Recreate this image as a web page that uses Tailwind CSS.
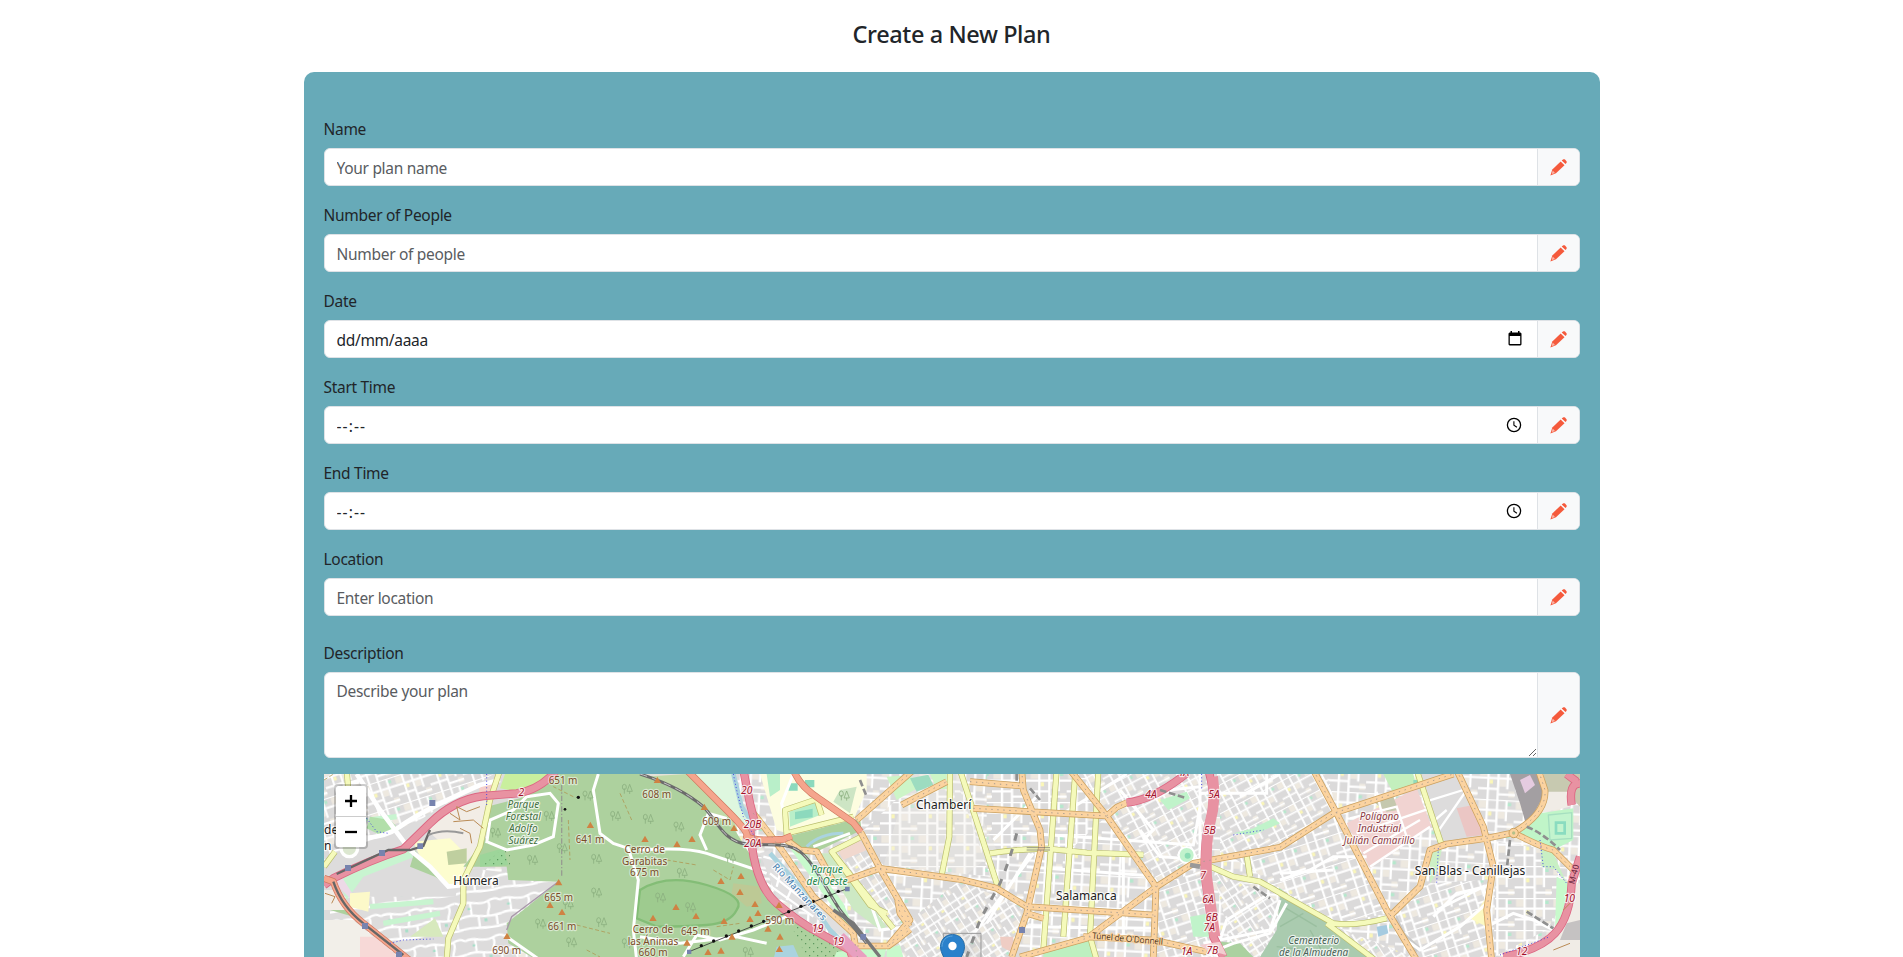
<!DOCTYPE html>
<html lang="en">
<head>
<meta charset="utf-8">
<title>Create a New Plan</title>
<script src="https://cdn.jsdelivr.net/npm/@tailwindcss/browser@4"></script>
</head>
<body class="h-[957px] overflow-hidden bg-white font-['Noto_Sans',sans-serif] text-base leading-6 text-[#212529]">
<svg class="hidden">
  <symbol id="pencil" viewBox="0 0 17 17">
    <g fill="#f55a3c"><path d="M11.700 1.400 13 .5c.6-.5 1.500-.4 2 .1l1.300 1.400c.6.6.6 1.400.1 2l-.9 1.100z"/><path d="M10.700 2.400 14.500 6.200 6 14.200.4 16.500 2.300 10.500z"/></g>
    <path d="M2.700 11.600 5 14 2.200 15 1.800 14.600z" fill="#fbb3a5"/>
  </symbol>
  <symbol id="clock" viewBox="0 0 16 16"><circle cx="8" cy="8" r="6.600" fill="none" stroke="#000" stroke-width="1.300"/><path d="M7.900 4.200v4l3 2" fill="none" stroke="#000" stroke-width="1.100"/></symbol>
</svg>
<main class="mx-auto flex w-[1296px] flex-col">
  <h4 class="flex h-[72px] items-center justify-center pb-1 text-[23.500px] font-medium tracking-[-0.4px]">Create a New Plan</h4>
  <form class="h-[885px] rounded-t-[10px] bg-[#67aab8] px-5 pt-11 tracking-[-0.3px]">
    <div class="mb-4"><label class="mb-1.5 block text-[15.500px] leading-[26px]">Name</label>
      <div class="flex h-[38px] overflow-hidden rounded-md border border-[#dee2e6] bg-white"><input class="min-w-0 flex-1 px-3 pt-px text-[15.500px] placeholder:text-[#595c5f]" placeholder="Your plan name"><span class="flex w-[42px] items-center border-l border-[#dee2e6] bg-[#f8f9fa] pl-3"><svg class="size-[17px]"><use href="#pencil"/></svg></span></div></div>
    <div class="mb-4"><label class="mb-1.5 block text-[15.500px] leading-[26px]">Number of People</label>
      <div class="flex h-[38px] overflow-hidden rounded-md border border-[#dee2e6] bg-white"><input class="min-w-0 flex-1 px-3 pt-px text-[15.500px] placeholder:text-[#595c5f]" placeholder="Number of people"><span class="flex w-[42px] items-center border-l border-[#dee2e6] bg-[#f8f9fa] pl-3"><svg class="size-[17px]"><use href="#pencil"/></svg></span></div></div>
    <div class="mb-4"><label class="mb-1.5 block text-[15.500px] leading-[26px]">Date</label>
      <div class="flex h-[38px] overflow-hidden rounded-md border border-[#dee2e6] bg-white"><input class="min-w-0 flex-1 px-3 pt-px text-[15.500px]" value="dd/mm/aaaa"><svg class="mr-[15px] mb-px h-[15px] w-[14px] self-center" viewBox="0 0 14 15"><path d="M2.500 0H4v1.500h6V0h1.500v1.500h1l1 1V13.500l-1 1h-11l-1-1V2.500l1-1h1zM1.800 5v8h10.400V5z" fill="#000" fill-rule="evenodd"/></svg><span class="flex w-[42px] items-center border-l border-[#dee2e6] bg-[#f8f9fa] pl-3"><svg class="size-[17px]"><use href="#pencil"/></svg></span></div></div>
    <div class="mb-4"><label class="mb-1.5 block text-[15.500px] leading-[26px]">Start Time</label>
      <div class="flex h-[38px] overflow-hidden rounded-md border border-[#dee2e6] bg-white"><input class="min-w-0 flex-1 px-3 pt-px text-[15.500px] tracking-[1.100px]" value="--:--"><svg class="mr-[15px] mb-px size-4 self-center"><use href="#clock"/></svg><span class="flex w-[42px] items-center border-l border-[#dee2e6] bg-[#f8f9fa] pl-3"><svg class="size-[17px]"><use href="#pencil"/></svg></span></div></div>
    <div class="mb-4"><label class="mb-1.5 block text-[15.500px] leading-[26px]">End Time</label>
      <div class="flex h-[38px] overflow-hidden rounded-md border border-[#dee2e6] bg-white"><input class="min-w-0 flex-1 px-3 pt-px text-[15.500px] tracking-[1.100px]" value="--:--"><svg class="mr-[15px] mb-px size-4 self-center"><use href="#clock"/></svg><span class="flex w-[42px] items-center border-l border-[#dee2e6] bg-[#f8f9fa] pl-3"><svg class="size-[17px]"><use href="#pencil"/></svg></span></div></div>
    <div class="mb-6"><label class="mb-1.5 block text-[15.500px] leading-[26px]">Location</label>
      <div class="flex h-[38px] overflow-hidden rounded-md border border-[#dee2e6] bg-white"><input class="min-w-0 flex-1 px-3 pt-px text-[15.500px] placeholder:text-[#595c5f]" placeholder="Enter location"><span class="flex w-[42px] items-center border-l border-[#dee2e6] bg-[#f8f9fa] pl-3"><svg class="size-[17px]"><use href="#pencil"/></svg></span></div></div>
    <div class="mb-4"><label class="mb-1.5 block text-[15.500px] leading-[26px]">Description</label>
      <div class="flex h-[86px] overflow-hidden rounded-md border border-[#dee2e6] bg-white"><textarea class="min-w-0 flex-1 resize-none px-3 py-1.5 text-[15.500px] placeholder:text-[#595c5f]" placeholder="Describe your plan"></textarea><svg class="mb-px size-2 self-end" viewBox="0 0 8 8"><path d="M0 8 7 1M4 8l3-3" stroke="#555" stroke-width=".9"/></svg><span class="flex w-[42px] items-center border-l border-[#dee2e6] bg-[#f8f9fa] pl-3"><svg class="size-[17px]"><use href="#pencil"/></svg></span></div></div>

    <div class="relative h-[183px] overflow-hidden bg-[#e0dfdf] tracking-normal">
      <svg class="block h-[183px] w-[1256px]" viewBox="12 12 3768 549" font-family="'Noto Sans',sans-serif">
        <defs>
          <pattern id="g0" width="112" height="96" patternUnits="userSpaceOnUse"><rect width="112" height="96" fill="#dbdada"/><path d="M4 4h24v22H4zM64 36h20v20H64zM92 70h18v18H92z" fill="#eee9e0"/><path d="M34 37h10v12H34z" fill="#fbf7b8"/><path d="M90 8h12v10H90z" fill="#b5e8cd"/><path d="M0 0h112M0 32h112M0 64h60M30 0v96M60 0v96M88 0v64M60 80h52" stroke="#fff" stroke-width="7" fill="none"/></pattern>
          <pattern id="g1" href="#g0" patternTransform="rotate(-28) scale(.8)"/>
          <pattern id="g2" href="#g0" patternTransform="rotate(57) scale(.75)"/>
          <pattern id="g3" href="#g0" patternTransform="rotate(3)"/>
          <pattern id="g4" href="#g0" patternTransform="rotate(-18) scale(.9)"/>
          <pattern id="sub" width="120" height="110" patternUnits="userSpaceOnUse" patternTransform="rotate(-8)"><path d="M0 20c30-14 50 12 80 0s30-4 40 0M0 60c40-14 60 14 120 0M0 95c40-8 60 10 120 0M30 15v40M84 20c10 20-10 30-4 42M50 62v34M104 62v30" stroke="#fff" stroke-width="7" fill="none"/><path d="M20 32h8v7h-8zM66 70h9v9h-9z" fill="#a7dfc9"/></pattern>
          <pattern id="dots" width="24" height="24" patternUnits="userSpaceOnUse"><circle cx="5" cy="5" r="2" fill="#4b8b4f"/><circle cx="17" cy="17" r="2" fill="#4b8b4f"/></pattern>
          <g id="tree" fill="none" stroke="#8bb07f" stroke-width="2.500"><ellipse cx="-7" cy="-6" rx="6" ry="8"/><path d="M-7-2v16M9-14 1 7h16zM9 7v8"/></g>
          <path id="pk" d="M0-10 11 9h-22z" fill="#cf8243"/>
          <g id="primary">
            <path d="M1100 0Q1160 60 1225 125T1280 200Q1310 215 1390 208L1415 198"/>
            <path d="M1420 0Q1440 50 1500 88L1600 158 1622 186"/>
            <path d="M12 325 40 335Q65 410 130 460L280 580"/>
          </g>
          <g id="secondary">
            <path d="M1300 130Q1340 180 1385 240L1480 380 1600 490 1612 561M1612 528H1705L1730 510 1770 478M1400 210 1440 240 1490 245 1540 335M1580 330 1680 295M1622 186 1680 295 1770 450 1705 528M1768 470 1740 430 1733 390M1680 295 1920 328 2030 355 2120 410M1610 150 1780 0M1745 105 1880 35"/>
            <path d="M1950 35 2105 48M2105 0 2110 60 2160 180 2165 230 2120 430 2075 561M1960 115 2360 138M2250 0 2360 138 2508 350 2500 561M2360 138 2390 112 2420 98M2100 561 2300 505 2510 350 2620 280 2880 232 3040 130 3400 12M2120 410 2500 435M2120 430 2170 445M2290 500 2500 510 2660 545"/>
            <path d="M2980 0 3050 130 3200 420 3290 570M3410 0 3490 170 3520 290 3500 420 3515 570M3210 438 3300 350 3330 240 3380 222 3500 205 3580 188Q3680 130 3675 60L3655 0M3580 188Q3660 230 3700 240L3760 300"/>
          </g>
          <g id="yellow">
            <path d="M1400 195 1395 120 1490 88 1505 135M1400 190 1500 165 1600 140M1625 200 1535 245 1650 405 1700 430M1535 245 1720 475M1890 0 1888 200 1865 315M2210 0 2170 540M2265 20 2230 500M2335 0 2310 500 2330 570M1920 0 2035 355M2010 250Q2080 238 2180 236L2300 248 2470 254M2640 276 2740 320 2820 335 2900 380M2780 255 2790 320M2880 370 3040 460Q3100 470 3200 445M3290 0 3365 225M3020 460 3165 570M540 0 510 90 480 230 430 330 430 400 385 505 380 570M80 0 85 60M12 290 45 245"/>
          </g>
          <g id="motor">
            <path d="M12 345 40 325Q150 270 250 238L330 160Q400 90 490 78L590 70Q660 60 710 0"/>
            <path d="M1270 0 1290 100 1310 180M1290 170Q1300 340 1370 400T1500 490L1590 540 1600 570"/>
            <path d="M2420 98Q2500 90 2600 10"/>
            <path d="M2665 0Q2690 80 2670 150T2655 320L2680 500 2710 561"/>
            <path d="M3780 260 3755 340Q3750 440 3705 490T3550 561M3740 12 3770 35M3755 105Q3745 40 3780 40"/>
          </g>
        </defs>
        <rect width="3800" height="570" fill="url(#g3)"/>
        <!-- districts -->
        <path d="M0 0H700L430 400 600 570H0z" fill="#dddcdc"/><path d="M0 0H540L300 150 12 270z" fill="url(#g4)"/>
        <path d="M30 380H600V570H30z" fill="url(#sub)"/><path d="M420 290 720 330 560 570H380z" fill="#dddcdc"/><path d="M420 290 720 330 560 570H380z" fill="url(#sub)"/>
        <path d="M2000 0H2260L2360 138 2250 240 2000 240z" fill="url(#g0)"/>
        <path d="M2280 0H2670V250L2520 340 2360 138z" fill="url(#g1)"/>
        <path d="M2700 0H3020L3050 130 2880 232 2700 260z" fill="url(#g1)"/>
        <path d="M2720 250 2880 232 3040 130 3210 430 3040 460z" fill="url(#g4)"/>
        <path d="M2680 300 3020 460 3280 561H2740z" fill="url(#g2)"/>
        <path d="M2510 350 2670 290 2680 561H2510z" fill="url(#g4)"/>
        <path d="M1920 330 2140 430 2075 561H1700L1770 450z" fill="url(#g2)"/>
        <path d="M1560 260 1640 200 1770 450 1720 470z" fill="url(#g2)"/>
        <path d="M1760 60H1920L2010 320 1690 285 1625 186z" fill="url(#g0)"/>
        <path d="M1770 0 1920 0 2030 240 1920 330 1690 290z" fill="#f2efe9" opacity=".35"/>
        <path d="M3220 430 3330 340 3500 330 3510 561H3290z" fill="url(#g4)"/>
        <path d="M3530 215 3700 240 3730 400 3680 480 3520 561z" fill="url(#g0)"/>
        <path d="M3300 12H3410L3500 200 3360 222z" fill="#dddcdc"/><path d="M3300 100 3430 60M3350 190 3440 60M3345 150 3380 120" stroke="#fff" stroke-width="7"/>
        <!-- land use -->
        <path d="M330 160Q400 90 500 90L490 200 430 320 400 250 320 180z" fill="#f2ede6"/>
        <path d="M280 215 390 205 435 250 430 320 395 350 300 260z" fill="#fdfdcf"/><path d="M380 245 440 235V280L385 285z" fill="#bfcf9f"/>
        <path d="M285 240 370 340 395 355 345 320 270 290z" fill="#add19e"/>
        <path d="M50 320 265 240 280 262 130 320 80 390z" fill="#c8f4d0"/><path d="M65 320 100 375 90 385 35 330z" fill="#ecd9e7"/>
        <path d="M150 410 340 395M190 460 360 430M150 150 230 140" stroke="#c8f4d0" stroke-width="16"/><path d="M90 370 150 365 145 425 90 410z" fill="#fcf9c9"/>
        <path d="M150 140 210 150 240 180 180 195 140 175z" fill="#b2dfaa"/><path d="M12 415 60 410 130 460 100 440z" fill="#add19e"/><path d="M12 360 40 360 80 420 12 420z" fill="#f2ede6"/>
        <path d="M10 450H100L160 500 220 570H10z" fill="#f2efe9"/><path d="M120 500 165 500 245 570H120z" fill="#f7d9d7"/><path d="M345 445 370 500H270z" fill="#d7e9bd"/>
        <path d="M555 12H690Q640 80 540 55z" fill="#c9ef9e"/><path d="M480 40H520L510 80H475z" fill="#f5cfc9"/>
        <path d="M700 12H960L1060 35 1120 70 1220 140 1300 270 1340 340 1390 420 1500 490 1600 570H650L565 520 560 460 715 335 565 330 560 290 430 290 500 200 500 110 600 85z" fill="#add19e"/>
        <path d="M960 12H1120L1260 170 1210 150 1080 65z" fill="#e4e2d8"/><path d="M970 20 1080 62 1200 150 1255 185 1230 130 1100 12z" fill="#c0daa8"/>
        <path d="M1110 12H1240L1290 170 1240 150z" fill="#def7df"/>
        <path d="M550 235 565 285 480 290 480 255z" fill="#9dd59a"/>
        <path d="M550 235H570V285H490z" fill="url(#dots)"/>
        <path d="M960 360Q1040 310 1160 345T1250 420Q1230 460 1160 465T1010 470L950 445z" fill="#9ecb8f" stroke="#83bd76" stroke-width="7"/>
        <path d="M1240 340 1320 350 1325 400 1280 410 1235 370z" fill="#bdc995"/>
        <path d="M1320 12H1640L1640 60 1600 150 1400 190 1370 180z" fill="#fdfde0"/>
        <path d="M1340 12H1380V60L1350 80zM1408 125 1495 95 1500 135 1410 170z" fill="#b9efc9"/><path d="M1425 126 1478 116V142L1425 148zM1405 40h28v22h-28zM1455 30h28v22h-28z" fill="#8cd9bd"/>
        <path d="M1560 60 1610 50 1590 130 1540 95z" fill="#cde5c4"/><path d="M1700 20 1770 15 1800 50 1730 90zM1830 12h50v45h-30z" fill="#cdf5c7"/><path d="M1770 25 1825 14 1840 45 1790 65z" fill="#9ddcc0"/>
        <path d="M1400 200 1620 145 1625 180 1490 245 1440 240z" fill="#add19e"/><path d="M1460 230Q1500 190 1570 190" stroke="#aad3df" stroke-width="9" fill="none"/>
        <path d="M1410 235 1450 240 1570 400 1600 470 1570 455z" fill="#c8facc"/><path d="M1500 250 1535 250 1700 470 1680 480 1600 420z" fill="#cde9c4"/>
        <path d="M1550 235 1620 210 1640 240 1570 270z" fill="#f1d8ce"/><path d="M1320 250 1350 240 1550 440 1600 520 1480 440 1370 380z" fill="#e0dfdf"/><path d="M1330 260 1370 270 1490 420M1350 310 1500 430M1340 340 1480 440M1390 270 1370 350M1430 320 1400 390" stroke="#fff" stroke-width="7" fill="none"/>
        <path d="M1400 440 1460 470 1580 540 1590 561H1460z" fill="#add19e"/><path d="M1400 440 1460 470 1580 540 1590 561H1460z" fill="url(#dots)"/><path d="M1370 530 1420 525 1440 570H1360z" fill="#aad3df"/>
        <path d="M1550 545 1700 530 1690 570H1540zM1700 535 1740 525 1750 561H1700z" fill="#c8facc"/>
        <path d="M2170 530 2310 505 2320 561H2170z" fill="#bdf0c0"/><path d="M2520 90 2600 65 2610 85 2545 120zM2740 190 2800 175 2860 145 2880 160 2800 195z" fill="#c0f3ca"/>
        <path d="M2610 440 2670 430 2690 500H2620z" fill="#c0f3ca"/><path d="M2040 500H2080V550L2045 530z" fill="#efcdc4"/>
        <path d="M2700 515 2760 520 2800 561H2700z" fill="#abd1a0"/><path d="M2840 561 2880 460 2940 480V561z" fill="#aaccaf"/>
        <path d="M2880 380 3030 460 3150 561H2820L2870 480z" fill="#aacbaf"/><path d="M2890 410 2990 470M2880 470 2950 430M2970 480 3010 550M2870 530 3050 550" stroke="#9abf9f" stroke-width="4"/>
        <path d="M3080 160 3290 55 3335 170 3150 295z" fill="#f1d3d1"/><path d="M3410 115 3460 105 3490 195 3440 200z" fill="#ebc6c4"/><path d="M3160 95 3220 80 3235 120 3200 125z" fill="#c5c8ae"/>
        <path d="M3190 12H3280L3290 50 3220 70z" fill="#c3efbd"/><path d="M3280 30h20v20h-20z" fill="#91dabb"/>
        <path d="M3090 145 3230 110 3270 230M3130 250 3300 150M3170 65 3190 150M3110 190 3330 115M3150 290 3330 170" stroke="#fff" stroke-width="7" fill="none"/>
        <path d="M3570 12H3660L3680 60 3620 170 3600 100z" fill="#a39fa2"/><path d="M3600 30 3630 15 3645 45 3615 70z" fill="#e5cbe0"/>
        <path d="M3670 12H3780V110L3740 65 3685 80z" fill="#c7c9b0"/><path d="M3685 65H3740L3750 110 3660 130z" fill="#f0ece6"/><path d="M3660 130 3760 115V210L3700 240 3600 190z" fill="#c0f5c8"/><path d="M3685 135 3755 128V205L3690 210z" fill="#c3f4ce" stroke="#a6dfc0" stroke-width="4"/><path d="M3708 158h26v32h-26z" fill="none" stroke="#8adcc0" stroke-width="8"/>
        <path d="M3660 210 3700 250 3740 340 3710 300 3665 290z" fill="#c8f0c4"/><path d="M3710 320 3750 340 3735 440 3705 480z" fill="#c8facc"/>
        <path d="M3755 340H3780V561H3560L3700 510z" fill="#f0ece6"/><path d="M3740 460 3780 450V510H3720z" fill="#c5c2c2"/><path d="M3460 440 3500 380 3500 470 3440 440z" fill="#fcf9c3"/>
        <path d="M3330 230 3365 240 3350 310 3330 340z" fill="#cdf0c5"/><path d="M3230 435 3255 490 3300 530 3280 561 3225 450z" fill="#c9c9c9"/><path d="M3170 470 3200 465 3205 490 3175 500z" fill="#a5cbe0"/>
        <!-- streets -->
        <g stroke="#fff" stroke-width="9" fill="none">
          <path d="M80 200Q180 215 240 170T480 45L540 30M110 12 180 120 240 200 270 240 330 290 385 350 430 345" stroke-width="14"/>
          <path d="M500 220 510 150 580 120 620 80 690 70 715 100 700 200 640 225 560 240 500 215M835 12 820 60 840 190 880 220 925 235 955 330 940 480 950 570M560 500 660 570M960 240Q1100 230 1160 250T1340 310M1220 145 1165 130 1140 195 1160 240M1090 560 1130 495 1200 510 1300 480 1400 440M960 500 1080 520 1250 500 1340 520M1480 230 1590 190M1420 12 1385 100 1400 180M2230 130 2420 12M2460 180 2520 260 2660 270M2545 60 2640 50M2640 12V270M2640 70H2840V12M2880 12 2760 80M2880 310 3040 300M2880 330 2970 300 3040 260 3140 260M2400 60 2500 180 2470 210M2020 210 2150 80M2130 250 2000 460M2140 250 1940 520M3225 485 3300 540 3420 470 3500 400 3490 350 3350 420M3500 350 3410 370 3340 440M2700 510 2720 450 2850 370M2650 520 2850 480 2880 390M2900 400 2850 490 2740 520 2690 540M70 45 120 30M3700 480 3640 450 3580 430 3500 470M1655 410 1680 480 1760 470M2120 190 2620 225 2640 110M2120 290 2500 318M2110 470 2500 475M2240 200V500M2410 260V510"/>
        </g>
        <ellipse cx="2600" cy="255" rx="24" ry="24" fill="#c1f2cc" stroke="#fff" stroke-width="6"/><circle cx="2603" cy="257" r="9" fill="#8bdcb4"/>
        <circle cx="88" cy="235" r="25" fill="#dce7d0" stroke="#fff" stroke-width="10"/>
        <path d="M1240 12 1265 110 1310 180M1350 250 1440 350 1530 480 1590 540" stroke="#aad3df" stroke-width="14" fill="none"/>
        <g fill="none" stroke-linejoin="round">
          <use href="#yellow" stroke="#b9bd6c" stroke-width="18"/><use href="#yellow" stroke="#f5fabb" stroke-width="14"/>
          <use href="#secondary" stroke="#cba15f" stroke-width="20"/><use href="#secondary" stroke="#fbd3a0" stroke-width="15.500"/>
          <use href="#motor" stroke="#dc6682" stroke-width="25"/><use href="#motor" stroke="#e892a2" stroke-width="20"/>
          <use href="#primary" stroke="#cf785f" stroke-width="21"/><use href="#primary" stroke="#f5a58d" stroke-width="17"/>
          <path d="M2678 20Q2688 90 2672 150T2660 320L2685 500" stroke="#e892a2" stroke-width="32"/><path d="M1560 500 1630 570" stroke="#e8a0c0" stroke-width="32"/>
          <path d="M2640 525 2700 515 2720 555 2660 540z" fill="#f3cdd0"/>
        </g>
        <g fill="none" stroke="#aa9c90" stroke-width="3" stroke-dasharray="4 14"><use href="#secondary"/></g>
        <!-- railways and boundaries -->
        <g fill="none">
          <path d="M960 12Q1080 50 1150 110C1190 150 1210 215 1280 222S1400 215 1440 245 1520 360 1560 420L1640 520" stroke="#6b6b6b" stroke-width="9"/><path d="M960 12Q1080 50 1150 110C1190 150 1210 215 1280 222S1400 215 1440 245 1520 360 1560 420L1640 520" stroke="#d8d8d8" stroke-width="2.500" stroke-dasharray="22 16"/>
          <path d="M1540 420 1600 460 1680 561M1570 440 1640 510" stroke="#777" stroke-width="10"/>
          <path d="M50 312 205 240 270 240 310 228 330 180M40 335Q65 410 130 460L250 555" stroke="#666" stroke-width="7"/><path d="M325 195Q370 175 430 190" stroke="#999" stroke-width="6"/>
          <path d="M2090 190Q2070 270 2040 340L1980 450 1940 561" stroke="#8b8b8b" stroke-width="9" stroke-dasharray="22 26"/>
          <path d="M2090 12V38M2130 55 2160 90M2520 60 2600 85M2800 350 2850 385M3620 170Q3670 190 3720 240M3570 210 3560 300M1620 30 1640 80M3620 425 3700 475" stroke="#8f8f8f" stroke-width="8" stroke-dasharray="20 8"/>
          <path d="M2120 233H2190M2120 240H2190" stroke="#666" stroke-width="2"/><path d="M2610 285 2640 290" stroke="#999" stroke-width="14"/>
          <path d="M725 45V320" stroke="#979d91" stroke-width="4" stroke-dasharray="16 6 4 6"/><path d="M560 480 575 440 715 335" stroke="#a998aa" stroke-width="4"/>
          <path d="M12 30 60 0M745 150 750 270M760 80 700 50M900 70 935 150M770 465 870 490M800 540 840 561M1040 270 1130 285M1180 300 1230 330 1240 290M1190 470 1260 460" stroke="#ae9a57" stroke-width="2.500" stroke-dasharray="12 7"/>
          <path d="M390 130 420 150 410 110 440 125 480 110M400 155 460 150 490 175M420 175 450 190 455 220M15 370 45 380 35 400M3760 390 3730 420M3750 520 3700 540" stroke="#ba8b55" stroke-width="3"/>
          <path d="M140 145 170 185 205 190M500 12V110M210 520 250 510 340 507M1240 12 1250 60 1270 140 1320 230M2645 12V60M2740 195 2830 180M3355 235 3350 340M3660 210 3670 290 3700 290 3740 340M3540 555 3690 500" stroke="#4a4ae0" stroke-width="3" stroke-dasharray="3 7"/>
          <path d="M1107 545 1560 364 1580 357" stroke="#333" stroke-width="2.500"/>
        </g>
        <g fill="#111"><circle cx="1144" cy="527" r="5"/><circle cx="1181" cy="513" r="5"/><circle cx="1219" cy="498" r="5"/><circle cx="1256" cy="483" r="5"/><circle cx="1294" cy="468" r="5"/><circle cx="1331" cy="454" r="5"/><circle cx="1406" cy="425" r="5"/><circle cx="1443" cy="409" r="5"/><circle cx="1480" cy="394" r="5"/><circle cx="1517" cy="379" r="5"/><circle cx="1555" cy="364" r="5"/><circle cx="775" cy="82" r="5"/><circle cx="735" cy="118" r="4"/></g>
        <g fill="#7783ae"><path d="M328 90h18v18h-18zM292 220h17v17h-17zM177 240h18v18h-18zM75 285h18v18H75zM126 459h18v18h-18zM228 545h18v17h-18zM1575 350h14v14h-14zM1621 492h17v17h-17zM2097 471h18v18h-18zM1101 539h13v13h-13z"/></g>
        <circle cx="3581" cy="189" r="14" fill="#fbd3a0" stroke="#cba15f" stroke-width="3"/><circle cx="3581" cy="189" r="5" fill="#b3c08a"/>
        <g><use href="#tree" x="920" y="57"/><use href="#tree" x="802" y="77"/><use href="#tree" x="885" y="138"/><use href="#tree" x="686" y="138"/><use href="#tree" x="525" y="188"/><use href="#tree" x="725" y="235"/><use href="#tree" x="828" y="267"/><use href="#tree" x="636" y="270"/><use href="#tree" x="828" y="368"/><use href="#tree" x="743" y="403"/><use href="#tree" x="660" y="461"/><use href="#tree" x="843" y="457"/><use href="#tree" x="753" y="517"/><use href="#tree" x="920" y="520"/><use href="#tree" x="983" y="147"/><use href="#tree" x="1075" y="170"/><use href="#tree" x="1230" y="263"/><use href="#tree" x="1085" y="309"/><use href="#tree" x="1020" y="383"/><use href="#tree" x="1110" y="412"/><use href="#tree" x="1283" y="546"/><use href="#tree" x="1571" y="77"/></g>
        <g><use href="#pk" x="811" y="165"/><use href="#pk" x="716" y="337"/><use href="#pk" x="690" y="405"/><use href="#pk" x="726" y="426"/><use href="#pk" x="561" y="498"/><use href="#pk" x="1012" y="30"/><use href="#pk" x="1153" y="111"/><use href="#pk" x="1242" y="174"/><use href="#pk" x="1116" y="207"/><use href="#pk" x="975" y="207"/><use href="#pk" x="1071" y="222"/><use href="#pk" x="1263" y="318"/><use href="#pk" x="1203" y="333"/><use href="#pk" x="1260" y="366"/><use href="#pk" x="1305" y="402"/><use href="#pk" x="1314" y="429"/><use href="#pk" x="1068" y="411"/><use href="#pk" x="1128" y="438"/><use href="#pk" x="999" y="444"/><use href="#pk" x="1212" y="453"/><use href="#pk" x="1290" y="447"/><use href="#pk" x="1344" y="476"/><use href="#pk" x="1377" y="405"/><use href="#pk" x="1380" y="500"/><use href="#pk" x="1236" y="500"/><use href="#pk" x="1101" y="518"/><use href="#pk" x="1164" y="546"/><use href="#pk" x="1203" y="542"/><use href="#pk" x="1378" y="537"/></g>
        <!-- labels -->
        <g paint-order="stroke" stroke-linejoin="round" stroke="#fff" stroke-opacity=".75" stroke-width="7" text-anchor="middle">
          <g fill="#222" font-size="36"><text x="468" y="346" textLength="136">Húmera</text><text x="12" y="191" text-anchor="start">de</text><text x="12" y="239" text-anchor="start">n</text><text x="1871" y="116" textLength="166">Chamberí</text><text x="2299" y="391" textLength="182">Salamanca</text><text x="3450" y="315" textLength="331">San Blas - Canillejas</text></g>
          <g fill="#7a4b28" font-size="30" stroke-opacity=".5"><text x="729" y="42" textLength="86">651 m</text><text x="810" y="219" textLength="86">641 m</text><text x="716" y="392" textLength="86">665 m</text><text x="726" y="481" textLength="86">661 m</text><text x="560" y="552" textLength="86">690 m</text><text x="1010" y="84" textLength="86">608 m</text><text x="1190" y="166" textLength="86">609 m</text><text x="1379" y="462" textLength="86">590 m</text><text x="1126" y="495" textLength="86">645 m</text><text x="974" y="249">Cerro de</text><text x="974" y="284">Garabitas</text><text x="974" y="319">675 m</text><text x="999" y="488">Cerro de</text><text x="999" y="524">las Ánimas</text><text x="999" y="559">660 m</text></g>
          <g fill="#43703f" font-size="30" font-style="italic"><text x="610" y="115">Parque</text><text x="610" y="150">Forestal</text><text x="610" y="186">Adolfo</text><text x="610" y="221">Suárez</text><g fill="#218649"><text x="1521" y="309">Parque</text><text x="1521" y="344">del Oeste</text></g><g fill="#4a6357"><text x="2981" y="521">Cementerio</text><text x="2981" y="557">de la Almudena</text></g></g>
          <g fill="#8b3b45" font-size="30" font-style="italic"><text x="3178" y="150">Polígono</text><text x="3178" y="185">Industrial</text><text x="3178" y="221" textLength="213">Julián Camarillo</text></g>
          <g fill="#a3122b" font-size="31" font-style="italic"><text x="604" y="78">2</text><text x="1280" y="73">20</text><text x="1298" y="175">20B</text><text x="1298" y="232">20A</text><text x="1493" y="487">19</text><text x="1555" y="526">19</text><text x="2493" y="84">4A</text><text x="2590" y="18">4A</text><text x="2682" y="83">5A</text><text x="2669" y="193">5B</text><text x="2649" y="326">7</text><text x="2664" y="398">6A</text><text x="2675" y="454">6B</text><text x="2668" y="483">7A</text><text x="2677" y="551">7B</text><text x="2600" y="555">1A</text><text x="3748" y="396">10</text><text x="3605" y="555">12</text></g>
          <text fill="#3c79ad" font-size="28" transform="translate(1432 372) rotate(47)" textLength="222">Río Manzanares</text>
          <text fill="#543d25" stroke="#fbd3a0" font-size="26" transform="translate(2422 515) rotate(5)" textLength="213">Túnel de O'Donnell</text>
          <text fill="#5b1530" stroke="#e892a2" font-size="25" transform="translate(3770 315) rotate(-76)">M-40</text>
        </g>
        <path d="M1870 570V490H1983V570" fill="#888" fill-opacity=".12" stroke="#999" stroke-width="3"/>
        <g transform="translate(1860 492)"><path d="M37.500 1.500C16 1.500 1.500 18 1.500 38 1.500 58 15 72 37.500 122 60 72 73.500 58 73.500 38 73.500 18 59 1.500 37.500 1.500z" fill="#2a81cb" stroke="#276da8" stroke-width="3"/><path d="M37.500 6C18 6 6 21 6 38" fill="none" stroke="#5ea6dd" stroke-width="3"/><circle cx="37.500" cy="36" r="12.500" fill="#fff"/></g>
      </svg>
      <div class="absolute left-2.5 top-2.5 flex w-[34px] flex-col rounded border-2 border-black/20 bg-white bg-clip-padding">
        <span class="flex h-[31px] items-center justify-center border-b border-[#ccc]"><svg class="size-3" viewBox="0 0 12 12"><path d="M6 0v12M0 6h12" stroke="#000" stroke-width="2.300"/></svg></span>
        <span class="flex h-[30px] items-center justify-center pb-px"><svg class="size-3" viewBox="0 0 12 12"><path d="M0 6h12" stroke="#000" stroke-width="2.300"/></svg></span>
      </div>
    </div>
  </form>
</main>
</body>
</html>
